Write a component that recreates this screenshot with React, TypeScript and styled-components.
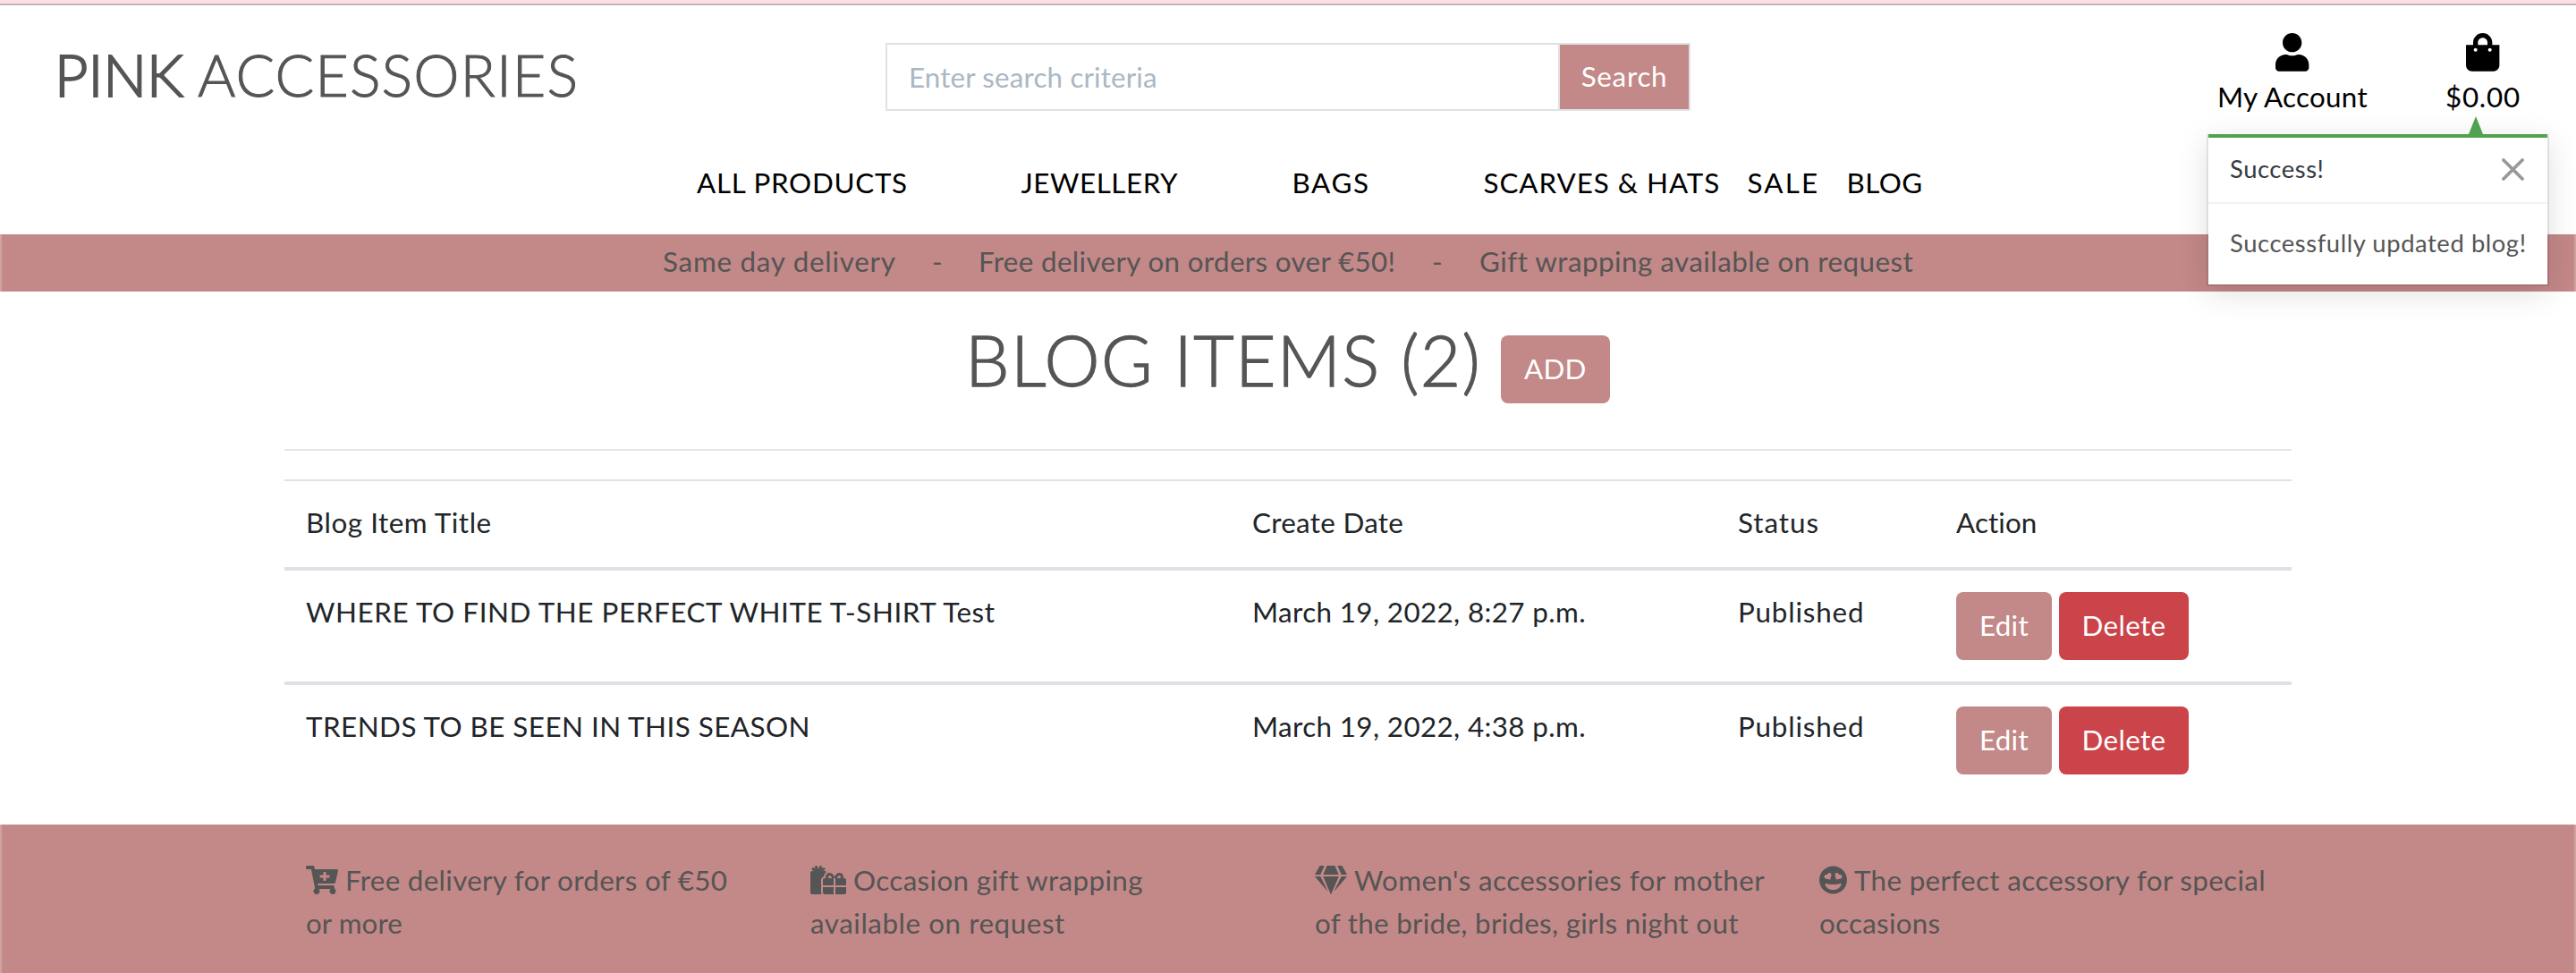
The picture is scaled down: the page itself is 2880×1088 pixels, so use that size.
import React from "react";
import styled, { createGlobalStyle } from "styled-components";
import {
  FaUser,
  FaShoppingBag,
  FaCartPlus,
  FaGifts,
  FaGem,
  FaGrinHearts,
} from "react-icons/fa";

const pink = "#c38888";
const ink = "#555555";
const line = "#dee2e6";

const GlobalStyle = createGlobalStyle`
  *, *::before, *::after { box-sizing: border-box; }
  body {
    margin: 0;
    background: #fff;
    color: #212529;
    font-family: Lato, "Open Sans", sans-serif;
    font-size: 31.36px;
    line-height: 48px;
  }
`;

const Page = styled.div`
  position: relative;
  display: flex;
  flex-direction: column;
  height: 1088px;
  overflow: hidden;
`;

const Text = styled.span<{ $track?: number }>`
  letter-spacing: ${(p) => p.$track ?? 0.4}px;
  white-space: nowrap;
`;

/* Large headings use the light cut, thickened slightly. */
const DisplayText = styled(Text)<{ $stroke: number }>`
  font-weight: 300;
  -webkit-text-stroke: ${(p) => p.$stroke}px ${ink};
`;

const edges = `box-shadow: inset 2px 0 rgba(255, 255, 255, 0.22), inset -2px 0 rgba(255, 255, 255, 0.22);`;

const TopBar = styled.div`
  flex: none;
  height: 6px;
  background: #fadfe4;
  border-bottom: 2px solid #c9b2b7;
`;

const Header = styled.header`
  flex: none;
  display: grid;
  grid-template-columns: 1fr 900px 1fr;
  align-items: start;
  height: 174px;
`;

const Logo = styled.a`
  display: flex;
  padding: 37px 0 0 61px;
  color: ${ink};
  font-size: 64.7px;
  line-height: 80px;
`;

const LogoMark = styled.span`
  width: 160px;
`;

const SearchForm = styled.form`
  display: flex;
  height: 76px;
  margin-top: 42px;
  border: 2px solid ${line};
`;

const SearchInput = styled.input`
  flex: 1;
  min-width: 0;
  padding: 0 24px 1px;
  border: 0;
  border-right: 2px solid ${line};
  outline: 0;
  background: #fff;
  font: inherit;
  letter-spacing: 0.15px;
  &::placeholder {
    color: #aab7c4;
    opacity: 1;
  }
`;

const SearchButton = styled.button`
  width: 144px;
  padding: 0 0 3px;
  border: 0;
  background: ${pink};
  color: #fff;
  font: inherit;
`;

const UserMenu = styled.div`
  display: flex;
  justify-content: flex-end;
  gap: 87px;
  padding: 31px 62px 0 0;
`;

const UserLink = styled.a`
  display: flex;
  flex-direction: column;
  align-items: center;
  gap: 4px;
  color: #000;
`;

const Nav = styled.nav`
  flex: none;
  display: flex;
  height: 82px;
  padding-left: 779px;
  color: #000;
`;

const Slot = styled.div<{ $width: number }>`
  flex: none;
  width: ${(p) => p.$width}px;
`;

const Banner = styled.div`
  flex: none;
  display: flex;
  height: 64px;
  padding: 6px 0 0 741px;
  background: ${pink};
  color: ${ink};
  ${edges}
`;

const Main = styled.main`
  flex: none;
  display: flex;
  flex-direction: column;
  width: 2244px;
  height: 596px;
  margin: 0 auto;
`;

const TitleRow = styled.div`
  display: flex;
  align-items: flex-start;
  height: 176px;
  padding: 28px 0 0 761px;
`;

const Title = styled.h1`
  width: 598.8px;
  margin: 0;
  color: ${ink};
  font-size: 78.4px;
  font-weight: 400;
  line-height: 96px;
`;

const Button = styled.button<{ $width: number; $color?: string }>`
  width: ${(p) => p.$width}px;
  height: 76px;
  padding: 0 0 3px;
  border: 0;
  border-radius: 8px;
  background: ${(p) => p.$color ?? pink};
  color: #fff;
  font: inherit;
`;

const AddButton = styled(Button)`
  margin-top: 21px;
`;

const Rule = styled.hr`
  width: 100%;
  height: 2px;
  margin: 0 0 32px;
  border: 0;
  background: rgba(0, 0, 0, 0.1);
`;

const Row = styled.div<{ $head?: boolean }>`
  display: grid;
  grid-template-columns: 1058px 543px 244px 399px;
  height: ${(p) => (p.$head ? 98 : 128)}px;
  border-top: ${(p) => (p.$head ? 2 : 4)}px solid ${line};
`;

const Cell = styled.div`
  padding: 22px 0 0 24px;
`;

const Actions = styled.div`
  display: flex;
  gap: 8px;
  padding: 24px 0 0 24px;
`;

const Footer = styled.footer`
  flex: 1;
  display: grid;
  grid-template-columns: repeat(4, 564px);
  align-content: start;
  padding: 38px 0 0 342px;
  background: ${pink};
  color: ${ink};
  ${edges}
`;

const Perk = styled.div`
  display: flex;
  flex-direction: column;
`;

const PerkLine = styled.div`
  display: flex;
  align-items: center;
  gap: 8px;
  height: 48px;
`;

const Toast = styled.section`
  position: absolute;
  top: 150px;
  left: 2467px;
  width: 383px;
  height: 170px;
  border: 2px solid rgba(0, 0, 0, 0.1);
  border-top: 0;
  background: #fff;
  background-clip: padding-box;
  box-shadow: 0 8px 32px rgba(0, 0, 0, 0.12);
  font-size: 27.4px;
`;

const ToastArrow = styled.div`
  position: absolute;
  top: -20px;
  left: 291px;
  border: 8px solid transparent;
  border-top: 0;
  border-bottom: 20px solid #51a351;
`;

const ToastHeader = styled.div`
  display: flex;
  align-items: center;
  justify-content: space-between;
  height: 78px;
  padding: 0 26px 2px 24px;
  border-top: 4px solid #51a351;
  border-bottom: 2px solid rgba(0, 0, 0, 0.05);
  color: #343a40;
`;

const ToastBody = styled.div`
  display: flex;
  align-items: center;
  height: 90px;
  padding: 0 24px 2px;
  color: ${ink};
`;

const columns: [string, number][] = [
  ["Blog Item Title", 0.55],
  ["Create Date", 0.3],
  ["Status", 0.95],
  ["Action", 0.1],
];

const posts = [
  {
    title: "WHERE TO FIND THE PERFECT WHITE T-SHIRT Test",
    track: 0.59,
    date: "March 19, 2022, 8:27 p.m.",
  },
  {
    title: "TRENDS TO BE SEEN IN THIS SEASON",
    track: 0.47,
    date: "March 19, 2022, 4:38 p.m.",
  },
];

const nav: [string, number, number][] = [
  ["ALL PRODUCTS", 362.5, 0.72],
  ["JEWELLERY", 303, 0.56],
  ["BAGS", 214, 1.66],
  ["SCARVES & HATS", 295, 0.95],
  ["SALE", 111, 2.2],
  ["BLOG", 100, 0.4],
];

const offers: [string, number, number][] = [
  ["Same day delivery", 301, 0.75],
  ["-", 52, 0],
  ["Free delivery on orders over €50!", 507, 0.35],
  ["-", 53, 0],
  ["Gift wrapping available on request", 500, 0.46],
];

const perks: {
  Icon: typeof FaGem;
  width: number;
  lines: [string, number][];
}[] = [
  {
    Icon: FaCartPlus,
    width: 36,
    lines: [["Free delivery for orders of €50", 0.31], ["or more", 0.05]],
  },
  {
    Icon: FaGifts,
    width: 40,
    lines: [["Occasion gift wrapping", 0.36], ["available on request", 0.55]],
  },
  {
    Icon: FaGem,
    width: 36,
    lines: [
      ["Women's accessories for mother", 0.42],
      ["of the bride, brides, girls night out", 0.29],
    ],
  },
  {
    Icon: FaGrinHearts,
    width: 31,
    lines: [["The perfect accessory for special", 0.34], ["occasions", 0.27]],
  },
];

export default function App() {
  return (
    <Page>
      <GlobalStyle />
      <TopBar />
      <Header>
        <Logo>
          <LogoMark>
            <DisplayText $stroke={2} $track={0}>
              PINK
            </DisplayText>
          </LogoMark>
          <DisplayText $stroke={1} $track={1.08}>
            ACCESSORIES
          </DisplayText>
        </Logo>
        <SearchForm>
          <SearchInput placeholder="Enter search criteria" />
          <SearchButton type="button">
            <Text $track={0.72}>Search</Text>
          </SearchButton>
        </SearchForm>
        <UserMenu>
          <UserLink>
            <FaUser style={{ width: 37.4, height: 42.7 }} />
            <Text $track={0.28}>My Account</Text>
          </UserLink>
          <UserLink>
            <FaShoppingBag style={{ width: 37.4, height: 42.7 }} />
            <Text $track={0.78}>$0.00</Text>
          </UserLink>
        </UserMenu>
      </Header>
      <Nav>
        {nav.map(([label, width, track]) => (
          <Slot key={label} $width={width}>
            <Text $track={track}>{label}</Text>
          </Slot>
        ))}
      </Nav>
      <Banner>
        {offers.map(([label, width, track], i) => (
          <Slot key={i} $width={width}>
            <Text $track={track}>{label}</Text>
          </Slot>
        ))}
      </Banner>
      <Main>
        <TitleRow>
          <Title>
            <DisplayText $stroke={1.3} $track={1.34}>
              BLOG ITEMS (2)
            </DisplayText>
          </Title>
          <AddButton $width={122}>
            <Text $track={0.16}>ADD</Text>
          </AddButton>
        </TitleRow>
        <Rule />
        <Row $head>
          {columns.map(([label, track]) => (
            <Cell key={label}>
              <Text $track={track}>{label}</Text>
            </Cell>
          ))}
        </Row>
        {posts.map((post) => (
          <Row key={post.title}>
            <Cell>
              <Text $track={post.track}>{post.title}</Text>
            </Cell>
            <Cell>
              <Text $track={0.38}>{post.date}</Text>
            </Cell>
            <Cell>
              <Text $track={0.84}>Published</Text>
            </Cell>
            <Actions>
              <Button $width={107}>
                <Text $track={0.25}>Edit</Text>
              </Button>
              <Button $width={145} $color="#cb444a">
                <Text $track={0.36}>Delete</Text>
              </Button>
            </Actions>
          </Row>
        ))}
      </Main>
      <Footer>
        {perks.map(({ Icon, width, lines }) => (
          <Perk key={lines[0][0]}>
            <PerkLine>
              <Icon style={{ width, height: 32 }} />
              <Text $track={lines[0][1]}>{lines[0][0]}</Text>
            </PerkLine>
            <PerkLine>
              <Text $track={lines[1][1]}>{lines[1][0]}</Text>
            </PerkLine>
          </Perk>
        ))}
      </Footer>
      <Toast>
        <ToastArrow />
        <ToastHeader>
          <Text $track={0.55}>Success!</Text>
          <svg width="25" height="25" viewBox="0 0 25 25">
            <path
              d="M2 2 L23 23 M23 2 L2 23"
              stroke="#979a9d"
              strokeWidth="3.8"
              strokeLinecap="round"
            />
          </svg>
        </ToastHeader>
        <ToastBody>
          <Text $track={0.57}>Successfully updated blog!</Text>
        </ToastBody>
      </Toast>
    </Page>
  );
}
